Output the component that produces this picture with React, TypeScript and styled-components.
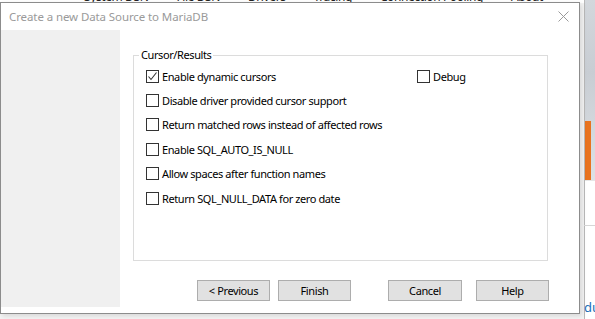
import styled, { createGlobalStyle } from "styled-components";

const GlobalStyle = createGlobalStyle`
  html, body {
    margin: 0;
    padding: 0;
    background: #ffffff;
  }
  body {
    font-family: "Noto Sans", "Liberation Sans", sans-serif;
    font-size: 11px;
    letter-spacing: -0.4px;
    color: #000;
  }
`;

type Option = { label: string; checked?: boolean };

const options: Option[] = [
  { label: "Enable dynamic cursors", checked: true },
  { label: "Disable driver provided cursor support" },
  { label: "Return matched rows instead of affected rows" },
  { label: "Enable SQL_AUTO_IS_NULL" },
  { label: "Allow spaces after function names" },
  { label: "Return SQL_NULL_DATA for zero date" },
];

const tabs = ["System DSN", "File DSN", "Drivers", "Tracing", "Connection Pooling", "About"];

const CheckBox = ({ label, checked }: Option) => (
  <CheckItem>
    <Box>
      {checked && (
        <svg width="11" height="11" viewBox="0 0 11 11">
          <polyline points="1.5,5.5 4,8.5 9.5,1.5" fill="none" stroke="#333" strokeWidth="1.1" />
        </svg>
      )}
    </Box>
    <span>{label}</span>
  </CheckItem>
);

const App = () => {
  return (
    <>
      <GlobalStyle />
      <Desktop>
        <Backdrop>
          <MainArea>
            <TabStrip>
              {tabs.map((t) => (
                <span key={t}>{t}</span>
              ))}
            </TabStrip>
          </MainArea>
          <SideBar>
            <Scenery>
              <OrangeBar />
            </Scenery>
            <SideWhite>
              <SideLink>du</SideLink>
            </SideWhite>
          </SideBar>
        </Backdrop>

        <Window>
          <TitleBar>
            <Title>Create a new Data Source to MariaDB</Title>
            <Close>
              <svg width="11" height="11" viewBox="0 0 11 11">
                <path d="M0.5 0.5 L10.5 10.5 M10.5 0.5 L0.5 10.5" stroke="#9a9a9a" strokeWidth="1" />
              </svg>
            </Close>
          </TitleBar>
          <Body>
            <SidePanel />
            <Content>
              <GroupBox>
                <Legend>Cursor/Results</Legend>
                <Rows>
                  {options.map((o, i) => (
                    <Row key={o.label}>
                      <MainCell>
                        <CheckBox {...o} />
                      </MainCell>
                      {i === 0 && <CheckBox label="Debug" />}
                    </Row>
                  ))}
                </Rows>
              </GroupBox>
              <ButtonBar>
                <Button $ml={77}>&lt; Previous</Button>
                <Button $ml={8}>Finish</Button>
                <Button $ml={37} $w={74}>Cancel</Button>
                <Button $ml={14}>Help</Button>
              </ButtonBar>
            </Content>
          </Body>
          <Footer />
        </Window>
      </Desktop>
    </>
  );
};

export default App;

const Desktop = styled.div`
  position: relative;
  width: 595px;
  height: 319px;
  overflow: hidden;
  background: #fff;
`;

const Backdrop = styled.div`
  display: flex;
  width: 100%;
  height: 100%;
`;

const MainArea = styled.div`
  flex: 1;
  background: #f4f4f4;
`;

const TabStrip = styled.div`
  height: 3px;
  overflow: hidden;
  display: flex;
  gap: 28px;
  padding-left: 84px;
  background: #fff;
  & > span {
    display: block;
    margin-top: -10px;
    font-size: 12px;
    line-height: 13px;
    color: #222;
    white-space: nowrap;
  }
`;

const SideBar = styled.div`
  width: 10px;
  border-left: 1px solid #b9b9b9;
  display: flex;
  flex-direction: column;
`;

const Scenery = styled.div`
  height: 180px;
  display: flex;
  flex-direction: column;
  justify-content: flex-end;
  background: linear-gradient(180deg, #d3d7dc 0%, #c8cdd3 40%, #dde1e5 100%);
`;

const OrangeBar = styled.div`
  width: 6px;
  height: 59px;
  background: #e8731f;
`;

const SideWhite = styled.div`
  flex: 1;
  background: #fff;
  border-top: 1px solid #e6e6e6;
  display: flex;
  flex-direction: column;
  justify-content: flex-end;
  padding-bottom: 5px;
`;

const SideLink = styled.div`
  font-size: 13px;
  line-height: 14px;
  letter-spacing: 0;
  color: #1d6fb8;
  margin-left: -1px;
  padding-top: 74px;
  border-top: 1px solid #d6d6d6;
`;

const Window = styled.div`
  position: absolute;
  left: 0;
  top: 2px;
  width: 580px;
  height: 312px;
  box-sizing: border-box;
  border: 1px solid #8c8c8c;
  background: #fff;
  display: flex;
  flex-direction: column;
  box-shadow: 2px 2px 5px rgba(0, 0, 0, 0.12);
`;

const TitleBar = styled.div`
  height: 27px;
  display: flex;
  align-items: center;
  justify-content: space-between;
  padding: 0 10px 0 8px;
`;

const Title = styled.div`
  font-size: 11.5px;
  letter-spacing: -0.1px;
  color: #9a9a9a;
  white-space: nowrap;
`;

const Close = styled.div`
  display: flex;
  align-items: center;
`;

const Body = styled.div`
  height: 277px;
  display: flex;
`;

const SidePanel = styled.div`
  width: 119px;
  background: #f0f0f0;
`;

const Content = styled.div`
  flex: 1;
  display: flex;
  flex-direction: column;
  padding: 17px 0 0 13px;
`;

const GroupBox = styled.fieldset`
  margin: 0;
  padding: 0;
  min-width: 0;
  width: 415px;
  height: 214px;
  box-sizing: border-box;
  border: 1px solid #dcdcdc;
`;

const Legend = styled.legend`
  margin-left: 5px;
  padding: 0 2px;
  font-size: 11px;
  line-height: 16px;
`;

const Rows = styled.div`
  display: flex;
  flex-direction: column;
  padding: 1px 0 0 12px;
`;

const Row = styled.div`
  display: flex;
  align-items: center;
  height: 24.4px;
`;

const MainCell = styled.div`
  width: 271px;
  flex-shrink: 0;
`;

const CheckItem = styled.label`
  display: flex;
  align-items: center;
  white-space: nowrap;
  font-size: 11px;
  color: #000;
`;

const Box = styled.span`
  flex-shrink: 0;
  width: 13px;
  height: 13px;
  box-sizing: border-box;
  border: 1px solid #333;
  background: #fff;
  margin-right: 3px;
  display: flex;
  align-items: center;
  justify-content: center;
`;

const Button = styled.button<{ $ml: number; $w?: number }>`
  margin-left: ${(p) => p.$ml}px;
  width: ${(p) => p.$w ?? 73}px;
  height: 21px;
  padding: 0;
  box-sizing: border-box;
  background: #e1e1e1;
  border: 1px solid #adadad;
  border-radius: 0;
  font-family: "Noto Sans", "Liberation Sans", sans-serif;
  font-size: 11px;
  letter-spacing: -0.4px;
  color: #000;
`;

const ButtonBar = styled.div`
  display: flex;
  margin-top: 19px;
  margin-left: -13px;
`;

const Footer = styled.div`
  flex: 1;
  background: #fff;
`;
